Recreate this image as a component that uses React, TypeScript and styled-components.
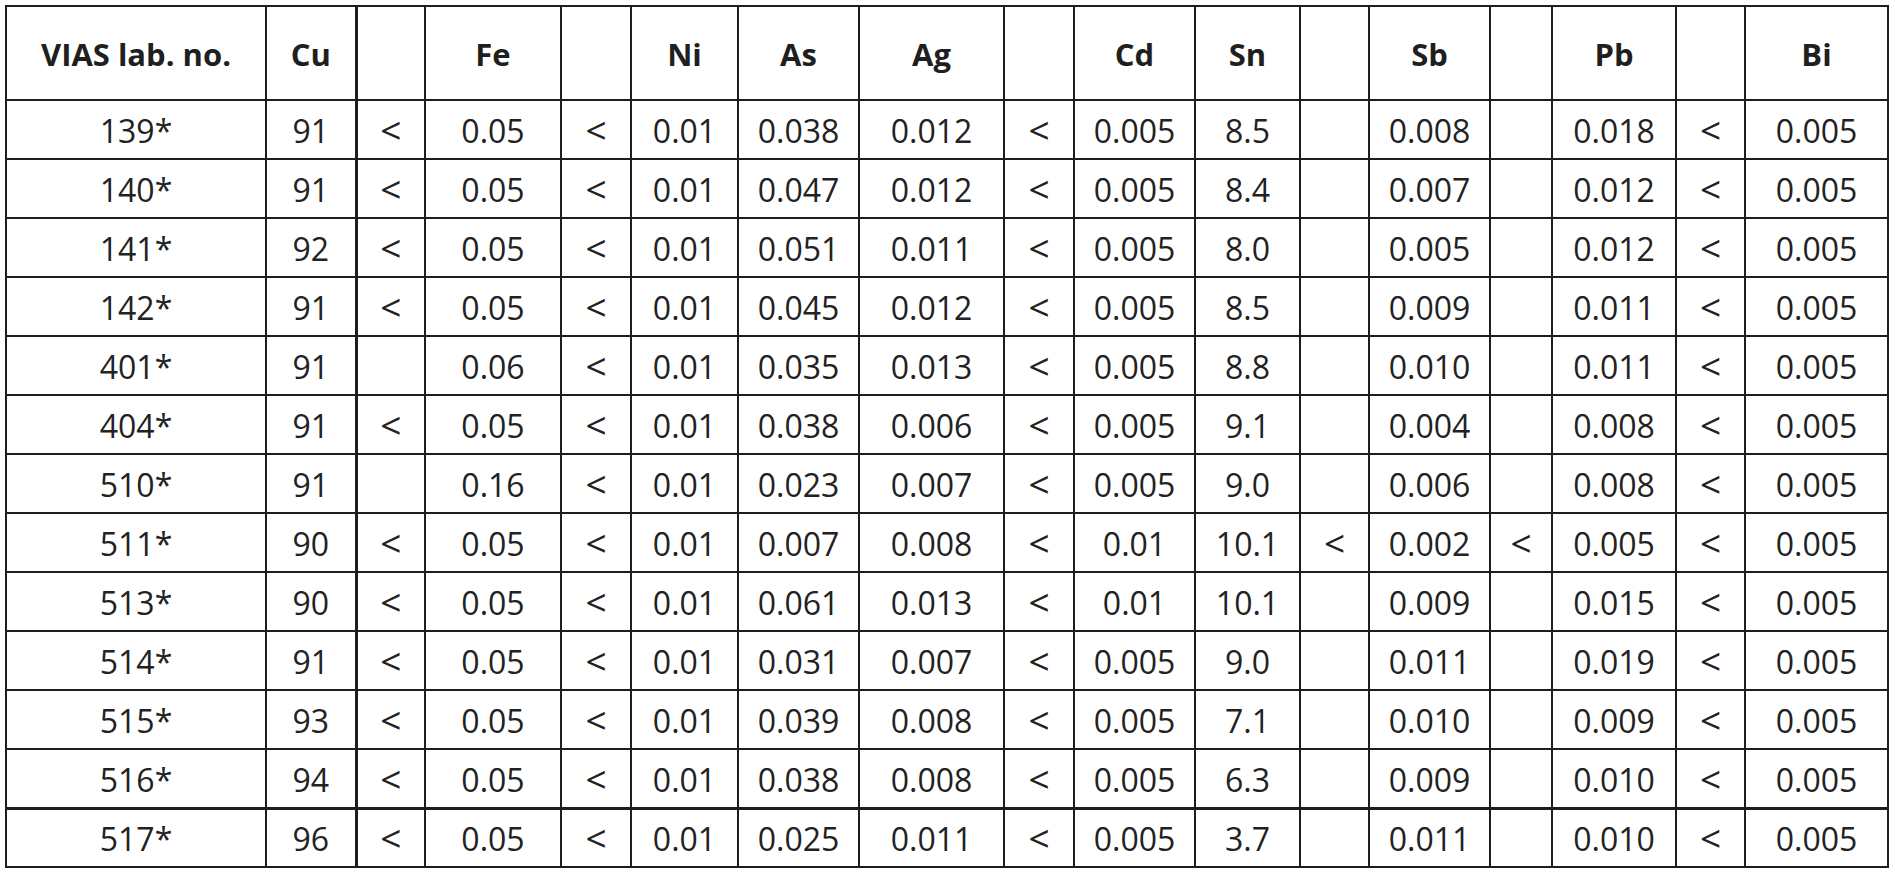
import React from 'react';
import styled, { createGlobalStyle } from 'styled-components';

const GlobalStyle = createGlobalStyle`
  html, body {
    margin: 0;
    padding: 0;
    background: #ffffff;
  }
  body {
    font-family: "Open Sans", "Noto Sans", "Liberation Sans", sans-serif;
  }
`;

const Page = styled.div`
  padding: 5px;
  background: #ffffff;
`;

const DataTable = styled.table`
  border-collapse: collapse;
  table-layout: fixed;
  width: 1884px;
  color: #222222;
  font-size: 32px;
`;

const HeadRow = styled.tr`
  height: 94px;
`;

const BodyRow = styled.tr<{ $thickTop?: boolean }>`
  height: 59px;

  td {
    border-top-width: ${({ $thickTop }) => ($thickTop ? '3px' : '2px')};
  }
`;

const HeaderCell = styled.th<{ $thickRight?: boolean }>`
  border: 2px solid #1e1e1e;
  border-right-width: ${({ $thickRight }) => ($thickRight ? '3px' : '2px')};
  font-weight: 700;
  font-size: 31px;
  text-align: center;
  vertical-align: middle;
  padding: 2px 0 0;
  color: #1f1f1f;
`;

const Cell = styled.td<{ $thickRight?: boolean; $symbol?: boolean }>`
  border: 2px solid #1e1e1e;
  border-right-width: ${({ $thickRight }) => ($thickRight ? '3px' : '2px')};
  text-align: center;
  vertical-align: middle;
  padding: ${({ $symbol }) => ($symbol ? '1px 0 0' : '3px 0 0')};
  font-size: ${({ $symbol }) => ($symbol ? '37px' : '32px')};
  line-height: 1.2;
  white-space: nowrap;
`;

// widths from the reference, left to right
const columnWidths = [260, 90, 69, 136, 70, 107, 121, 145, 70, 121, 105, 69, 121, 62, 124, 69, 143];

const headers = ['VIAS lab. no.', 'Cu', '', 'Fe', '', 'Ni', 'As', 'Ag', '', 'Cd', 'Sn', '', 'Sb', '', 'Pb', '', 'Bi'];

const rows: string[][] = [
  ['139*', '91', '<', '0.05', '<', '0.01', '0.038', '0.012', '<', '0.005', '8.5', '', '0.008', '', '0.018', '<', '0.005'],
  ['140*', '91', '<', '0.05', '<', '0.01', '0.047', '0.012', '<', '0.005', '8.4', '', '0.007', '', '0.012', '<', '0.005'],
  ['141*', '92', '<', '0.05', '<', '0.01', '0.051', '0.011', '<', '0.005', '8.0', '', '0.005', '', '0.012', '<', '0.005'],
  ['142*', '91', '<', '0.05', '<', '0.01', '0.045', '0.012', '<', '0.005', '8.5', '', '0.009', '', '0.011', '<', '0.005'],
  ['401*', '91', '', '0.06', '<', '0.01', '0.035', '0.013', '<', '0.005', '8.8', '', '0.010', '', '0.011', '<', '0.005'],
  ['404*', '91', '<', '0.05', '<', '0.01', '0.038', '0.006', '<', '0.005', '9.1', '', '0.004', '', '0.008', '<', '0.005'],
  ['510*', '91', '', '0.16', '<', '0.01', '0.023', '0.007', '<', '0.005', '9.0', '', '0.006', '', '0.008', '<', '0.005'],
  ['511*', '90', '<', '0.05', '<', '0.01', '0.007', '0.008', '<', '0.01', '10.1', '<', '0.002', '<', '0.005', '<', '0.005'],
  ['513*', '90', '<', '0.05', '<', '0.01', '0.061', '0.013', '<', '0.01', '10.1', '', '0.009', '', '0.015', '<', '0.005'],
  ['514*', '91', '<', '0.05', '<', '0.01', '0.031', '0.007', '<', '0.005', '9.0', '', '0.011', '', '0.019', '<', '0.005'],
  ['515*', '93', '<', '0.05', '<', '0.01', '0.039', '0.008', '<', '0.005', '7.1', '', '0.010', '', '0.009', '<', '0.005'],
  ['516*', '94', '<', '0.05', '<', '0.01', '0.038', '0.008', '<', '0.005', '6.3', '', '0.009', '', '0.010', '<', '0.005'],
  ['517*', '96', '<', '0.05', '<', '0.01', '0.025', '0.011', '<', '0.005', '3.7', '', '0.011', '', '0.010', '<', '0.005'],
];

const App: React.FC = () => {
  return (
    <Page>
      <GlobalStyle />
      <DataTable>
        <colgroup>
          {columnWidths.map((w, i) => (
            <col key={i} style={{ width: w }} />
          ))}
        </colgroup>
        <thead>
          <HeadRow>
            {headers.map((h, i) => (
              <HeaderCell key={i} $thickRight={i === 1}>
                {h}
              </HeaderCell>
            ))}
          </HeadRow>
        </thead>
        <tbody>
          {rows.map((row, r) => (
            <BodyRow key={row[0]} $thickTop={r === rows.length - 1}>
              {row.map((value, c) => (
                <Cell key={c} $thickRight={c === 1} $symbol={value === '<'}>
                  {value}
                </Cell>
              ))}
            </BodyRow>
          ))}
        </tbody>
      </DataTable>
    </Page>
  );
};

export default App;
